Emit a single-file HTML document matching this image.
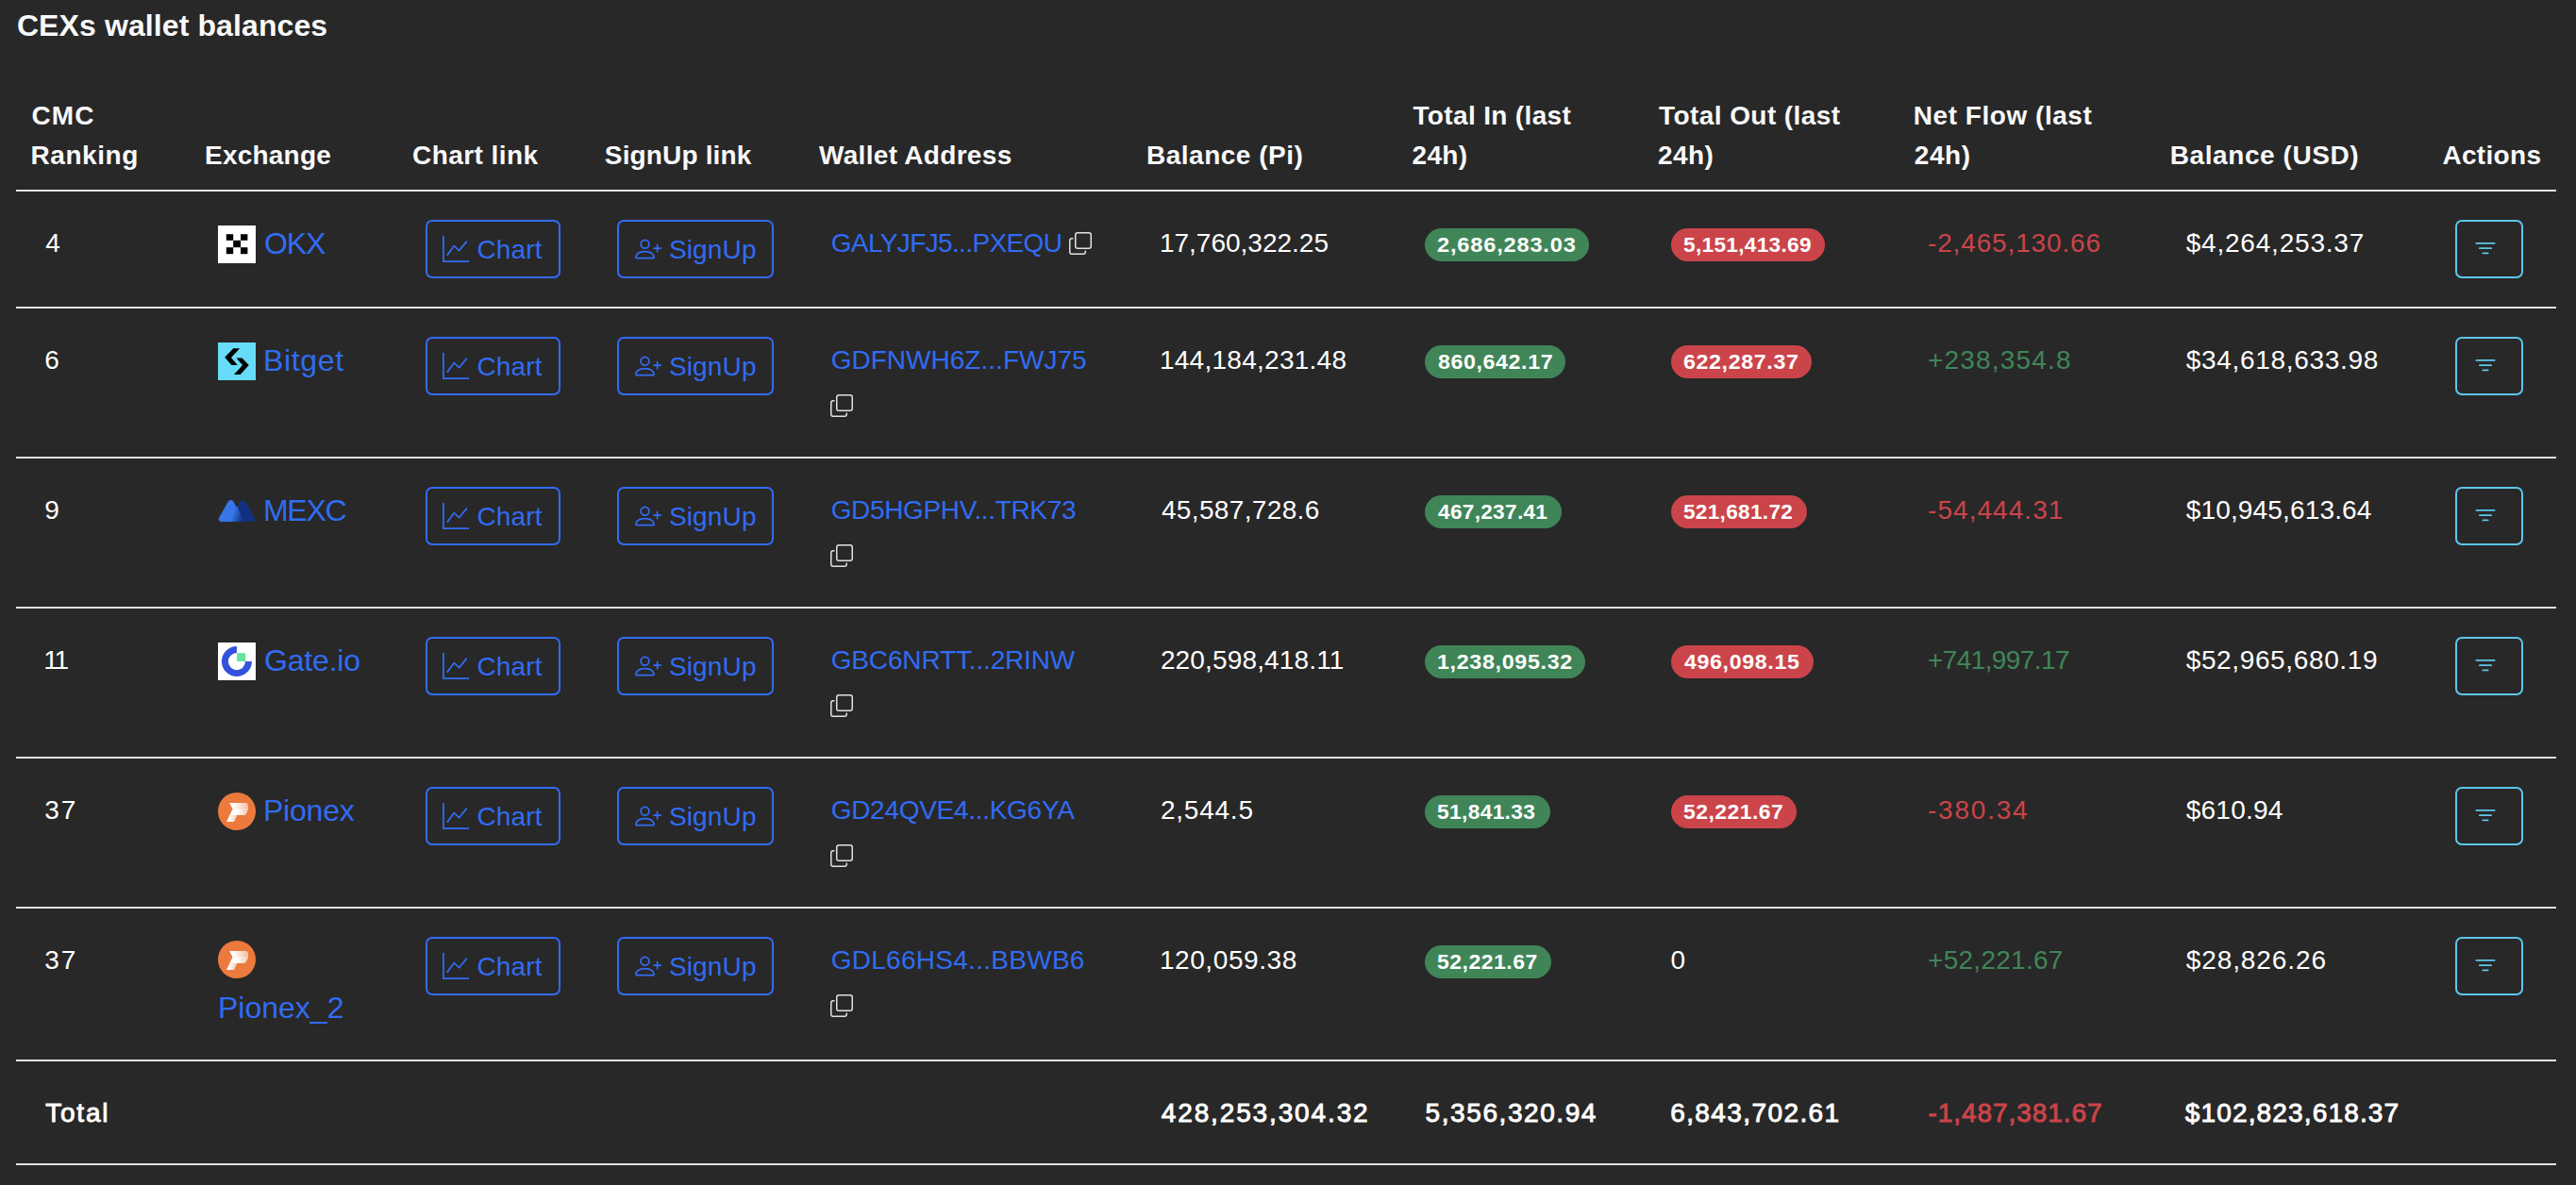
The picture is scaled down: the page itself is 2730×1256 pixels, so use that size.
<!DOCTYPE html>
<html><head><meta charset="utf-8"><title>CEXs wallet balances</title>
<style>
html,body{margin:0;padding:0;}
body{width:2730px;height:1256px;overflow:hidden;position:relative;background:#282828;font-family:"Liberation Sans",sans-serif;}
.t{position:absolute;white-space:nowrap;}
.abs{position:absolute;line-height:0;}
.btn{position:absolute;border:2px solid;border-radius:7px;box-sizing:content-box;}
.btn .ic{position:absolute;line-height:0;}
.badge{position:absolute;height:35px;border-radius:18px;}
</style></head><body>
<div class="t" style="left:17.90px;top:10.81px;font-size:32px;line-height:32px;color:#f8f9fa;font-weight:700;letter-spacing:0.105px;">CEXs wallet balances</div>
<div class="t" style="left:33.50px;top:108.89px;font-size:28px;line-height:28px;color:#f8f9fa;font-weight:700;letter-spacing:1.050px;">CMC</div>
<div class="t" style="left:32.50px;top:150.89px;font-size:28px;line-height:28px;color:#f8f9fa;font-weight:700;letter-spacing:0.550px;">Ranking</div>
<div class="t" style="left:217.00px;top:150.89px;font-size:28px;line-height:28px;color:#f8f9fa;font-weight:700;letter-spacing:0.214px;">Exchange</div>
<div class="t" style="left:437.00px;top:150.89px;font-size:28px;line-height:28px;color:#f8f9fa;font-weight:700;letter-spacing:0.444px;">Chart link</div>
<div class="t" style="left:640.80px;top:150.89px;font-size:28px;line-height:28px;color:#f8f9fa;font-weight:700;letter-spacing:0.160px;">SignUp link</div>
<div class="t" style="left:868.00px;top:150.89px;font-size:28px;line-height:28px;color:#f8f9fa;font-weight:700;letter-spacing:0.308px;">Wallet Address</div>
<div class="t" style="left:1215.00px;top:150.89px;font-size:28px;line-height:28px;color:#f8f9fa;font-weight:700;letter-spacing:0.500px;">Balance (Pi)</div>
<div class="t" style="left:1497.50px;top:108.89px;font-size:28px;line-height:28px;color:#f8f9fa;font-weight:700;letter-spacing:0.346px;">Total In (last</div>
<div class="t" style="left:1496.50px;top:150.89px;font-size:28px;line-height:28px;color:#f8f9fa;font-weight:700;letter-spacing:0.346px;">24h)</div>
<div class="t" style="left:1758.00px;top:108.89px;font-size:28px;line-height:28px;color:#f8f9fa;font-weight:700;letter-spacing:0.429px;">Total Out (last</div>
<div class="t" style="left:1757.00px;top:150.89px;font-size:28px;line-height:28px;color:#f8f9fa;font-weight:700;letter-spacing:0.429px;">24h)</div>
<div class="t" style="left:2027.80px;top:108.89px;font-size:28px;line-height:28px;color:#f8f9fa;font-weight:700;letter-spacing:0.538px;">Net Flow (last</div>
<div class="t" style="left:2028.80px;top:150.89px;font-size:28px;line-height:28px;color:#f8f9fa;font-weight:700;letter-spacing:0.538px;">24h)</div>
<div class="t" style="left:2299.80px;top:150.89px;font-size:28px;line-height:28px;color:#f8f9fa;font-weight:700;letter-spacing:0.575px;">Balance (USD)</div>
<div class="t" style="left:2588.40px;top:150.89px;font-size:28px;line-height:28px;color:#f8f9fa;font-weight:700;letter-spacing:0.317px;">Actions</div>
<div style="position:absolute;left:17px;top:201px;width:2692px;height:2px;background:#dee2e6"></div>
<div style="position:absolute;left:17px;top:325px;width:2692px;height:2px;background:#dee2e6"></div>
<div style="position:absolute;left:17px;top:484px;width:2692px;height:2px;background:#dee2e6"></div>
<div style="position:absolute;left:17px;top:643px;width:2692px;height:2px;background:#dee2e6"></div>
<div style="position:absolute;left:17px;top:802px;width:2692px;height:2px;background:#dee2e6"></div>
<div style="position:absolute;left:17px;top:961px;width:2692px;height:2px;background:#dee2e6"></div>
<div style="position:absolute;left:17px;top:1123px;width:2692px;height:2px;background:#dee2e6"></div>
<div style="position:absolute;left:17px;top:1233px;width:2692px;height:2px;background:#dee2e6"></div>
<div class="t" style="left:48.30px;top:243.69px;font-size:28px;line-height:28px;color:#ffffff;font-weight:400;letter-spacing:0.000px;">4</div>
<div class="abs" style="left:231px;top:239px;width:40px;height:40px"><svg width="40" height="40" viewBox="0 0 40 40"><rect width="40" height="40" fill="#fff"/><rect x="8.8" y="9.2" width="7.4" height="6.6" fill="#000"/><rect x="24" y="9.2" width="7.4" height="6.6" fill="#000"/><rect x="16.2" y="15.8" width="7.8" height="7.4" fill="#000"/><rect x="8.8" y="23.2" width="7.4" height="7" fill="#000"/><rect x="24" y="23.2" width="7.4" height="7" fill="#000"/></svg></div>
<div class="t" style="left:280.00px;top:242.11px;font-size:32px;line-height:32px;color:#316cf4;font-weight:400;letter-spacing:-1.100px;">OKX</div>
<div class="btn" style="left:451px;top:233px;width:139px;height:58px;border-color:#316cf4;color:#316cf4"><span class="ic" style="left:16px;top:15px"><svg width="28" height="28" viewBox="0 0 16 16" fill="currentColor"><path fill-rule="evenodd" d="M0 0h1v15h15v1H0zm14.817 3.113a.5.5 0 0 1 .07.704l-4.5 5.5a.5.5 0 0 1-.74.037L7.06 6.767l-3.656 5.027a.5.5 0 0 1-.808-.588l4-5.5a.5.5 0 0 1 .758-.06l2.609 2.61 4.15-5.073a.5.5 0 0 1 .704-.07"/></svg></span></div>
<div class="t" style="left:505.50px;top:250.59px;font-size:28px;line-height:28px;color:#316cf4;font-weight:400;letter-spacing:0.125px;">Chart</div>
<div class="btn" style="left:654px;top:233px;width:162px;height:58px;border-color:#316cf4;color:#316cf4"><span class="ic" style="left:16.6px;top:15px"><svg width="28" height="28" viewBox="0 0 16 16" fill="currentColor"><path d="M6 8a3 3 0 1 0 0-6 3 3 0 0 0 0 6m2-3a2 2 0 1 1-4 0 2 2 0 0 1 4 0m4 8c0 1-1 1-1 1H1s-1 0-1-1 1-4 6-4 6 3 6 4m-1-.004c-.001-.246-.154-.986-.832-1.664C9.516 10.68 8.289 10 6 10s-3.516.68-4.168 1.332c-.678.678-.83 1.418-.832 1.664z"/><path fill-rule="evenodd" d="M13.5 5a.5.5 0 0 1 .5.5V7h1.5a.5.5 0 0 1 0 1H14v1.5a.5.5 0 0 1-1 0V8h-1.5a.5.5 0 0 1 0-1H13V5.5a.5.5 0 0 1 .5-.5"/></svg></span></div>
<div class="t" style="left:708.90px;top:250.59px;font-size:28px;line-height:28px;color:#316cf4;font-weight:400;letter-spacing:0.160px;">SignUp</div>
<div class="t" style="left:880.70px;top:243.69px;font-size:28px;line-height:28px;color:#316cf4;font-weight:400;letter-spacing:-0.627px;">GALYJFJ5...PXEQU</div>
<div class="abs" style="left:1133px;top:246px;color:#dee2e6"><svg width="24" height="24" viewBox="0 0 16 16" fill="currentColor"><path fill-rule="evenodd" d="M4 2a2 2 0 0 1 2-2h8a2 2 0 0 1 2 2v8a2 2 0 0 1-2 2H6a2 2 0 0 1-2-2zm2-1a1 1 0 0 0-1 1v8a1 1 0 0 0 1 1h8a1 1 0 0 0 1-1V2a1 1 0 0 0-1-1zM2 5a1 1 0 0 0-1 1v8a1 1 0 0 0 1 1h8a1 1 0 0 0 1-1v-1h1v1a2 2 0 0 1-2 2H2a2 2 0 0 1-2-2V6a2 2 0 0 1 2-2h1v1z"/></svg></div>
<div class="t" style="left:1228.90px;top:243.69px;font-size:28px;line-height:28px;color:#ffffff;font-weight:400;letter-spacing:0.000px;">17,760,322.25</div>
<div class="badge" style="left:1510px;top:242px;width:173.8px;background:#408558"></div>
<div class="t" style="left:1523.23px;top:249.37px;font-size:22px;line-height:22px;color:#fff;font-weight:700;letter-spacing:0.772px;transform:scaleX(1.0717);transform-origin:0 0;">2,686,283.03</div>
<div class="badge" style="left:1771px;top:242px;width:163.0px;background:#cb444a"></div>
<div class="t" style="left:1784.47px;top:249.37px;font-size:22px;line-height:22px;color:#fff;font-weight:700;letter-spacing:0.310px;transform:scaleX(1.0276);transform-origin:0 0;">5,151,413.69</div>
<div class="t" style="left:2043.00px;top:243.69px;font-size:28px;line-height:28px;color:#cb444a;font-weight:400;letter-spacing:0.858px;">-2,465,130.66</div>
<div class="t" style="left:2316.70px;top:243.69px;font-size:28px;line-height:28px;color:#ffffff;font-weight:400;letter-spacing:0.792px;">$4,264,253.37</div>
<div class="btn" style="left:2602px;top:233px;width:68px;height:58px;border-color:#5cc7ec;color:#5cc7ec"><span class="ic" style="left:16px;top:15px"><svg width="28" height="28" viewBox="0 0 16 16" fill="currentColor"><path d="M6 10.5a.5.5 0 0 1 .5-.5h3a.5.5 0 0 1 0 1h-3a.5.5 0 0 1-.5-.5m-2-3a.5.5 0 0 1 .5-.5h7a.5.5 0 0 1 0 1h-7a.5.5 0 0 1-.5-.5m-2-3a.5.5 0 0 1 .5-.5h11a.5.5 0 0 1 0 1h-11a.5.5 0 0 1-.5-.5"/></svg></span></div>
<div class="t" style="left:47.30px;top:367.69px;font-size:28px;line-height:28px;color:#ffffff;font-weight:400;letter-spacing:0.000px;">6</div>
<div class="abs" style="left:231px;top:363px;width:40px;height:40px"><svg width="40" height="40" viewBox="0 0 40 40"><rect width="40" height="40" fill="#66dcf8"/><path d="M16.3 6.2H23.1L14 16 20.7 23.9H14.4L7.2 15.8Z" fill="#000"/><path d="M19.5 16.5H25.6L32.8 24.1 23.7 33.9H16.9L26 24.1Z" fill="#000"/></svg></div>
<div class="t" style="left:279.00px;top:366.11px;font-size:32px;line-height:32px;color:#316cf4;font-weight:400;letter-spacing:0.640px;">Bitget</div>
<div class="btn" style="left:451px;top:357px;width:139px;height:58px;border-color:#316cf4;color:#316cf4"><span class="ic" style="left:16px;top:15px"><svg width="28" height="28" viewBox="0 0 16 16" fill="currentColor"><path fill-rule="evenodd" d="M0 0h1v15h15v1H0zm14.817 3.113a.5.5 0 0 1 .07.704l-4.5 5.5a.5.5 0 0 1-.74.037L7.06 6.767l-3.656 5.027a.5.5 0 0 1-.808-.588l4-5.5a.5.5 0 0 1 .758-.06l2.609 2.61 4.15-5.073a.5.5 0 0 1 .704-.07"/></svg></span></div>
<div class="t" style="left:505.50px;top:374.59px;font-size:28px;line-height:28px;color:#316cf4;font-weight:400;letter-spacing:0.125px;">Chart</div>
<div class="btn" style="left:654px;top:357px;width:162px;height:58px;border-color:#316cf4;color:#316cf4"><span class="ic" style="left:16.6px;top:15px"><svg width="28" height="28" viewBox="0 0 16 16" fill="currentColor"><path d="M6 8a3 3 0 1 0 0-6 3 3 0 0 0 0 6m2-3a2 2 0 1 1-4 0 2 2 0 0 1 4 0m4 8c0 1-1 1-1 1H1s-1 0-1-1 1-4 6-4 6 3 6 4m-1-.004c-.001-.246-.154-.986-.832-1.664C9.516 10.68 8.289 10 6 10s-3.516.68-4.168 1.332c-.678.678-.83 1.418-.832 1.664z"/><path fill-rule="evenodd" d="M13.5 5a.5.5 0 0 1 .5.5V7h1.5a.5.5 0 0 1 0 1H14v1.5a.5.5 0 0 1-1 0V8h-1.5a.5.5 0 0 1 0-1H13V5.5a.5.5 0 0 1 .5-.5"/></svg></span></div>
<div class="t" style="left:708.90px;top:374.59px;font-size:28px;line-height:28px;color:#316cf4;font-weight:400;letter-spacing:0.160px;">SignUp</div>
<div class="t" style="left:880.70px;top:367.69px;font-size:28px;line-height:28px;color:#316cf4;font-weight:400;letter-spacing:0.020px;">GDFNWH6Z...FWJ75</div>
<div class="abs" style="left:880px;top:418px;color:#dee2e6"><svg width="24" height="24" viewBox="0 0 16 16" fill="currentColor"><path fill-rule="evenodd" d="M4 2a2 2 0 0 1 2-2h8a2 2 0 0 1 2 2v8a2 2 0 0 1-2 2H6a2 2 0 0 1-2-2zm2-1a1 1 0 0 0-1 1v8a1 1 0 0 0 1 1h8a1 1 0 0 0 1-1V2a1 1 0 0 0-1-1zM2 5a1 1 0 0 0-1 1v8a1 1 0 0 0 1 1h8a1 1 0 0 0 1-1v-1h1v1a2 2 0 0 1-2 2H2a2 2 0 0 1-2-2V6a2 2 0 0 1 2-2h1v1z"/></svg></div>
<div class="t" style="left:1228.90px;top:367.69px;font-size:28px;line-height:28px;color:#ffffff;font-weight:400;letter-spacing:0.269px;">144,184,231.48</div>
<div class="badge" style="left:1510px;top:366px;width:149.0px;background:#408558"></div>
<div class="t" style="left:1523.65px;top:373.37px;font-size:22px;line-height:22px;color:#fff;font-weight:700;letter-spacing:0.597px;transform:scaleX(1.0523);transform-origin:0 0;">860,642.17</div>
<div class="badge" style="left:1771px;top:366px;width:148.9px;background:#cb444a"></div>
<div class="t" style="left:1784.35px;top:373.37px;font-size:22px;line-height:22px;color:#fff;font-weight:700;letter-spacing:0.612px;transform:scaleX(1.0537);transform-origin:0 0;">622,287.37</div>
<div class="t" style="left:2043.00px;top:367.69px;font-size:28px;line-height:28px;color:#408558;font-weight:400;letter-spacing:1.178px;">+238,354.8</div>
<div class="t" style="left:2316.70px;top:367.69px;font-size:28px;line-height:28px;color:#ffffff;font-weight:400;letter-spacing:0.700px;">$34,618,633.98</div>
<div class="btn" style="left:2602px;top:357px;width:68px;height:58px;border-color:#5cc7ec;color:#5cc7ec"><span class="ic" style="left:16px;top:15px"><svg width="28" height="28" viewBox="0 0 16 16" fill="currentColor"><path d="M6 10.5a.5.5 0 0 1 .5-.5h3a.5.5 0 0 1 0 1h-3a.5.5 0 0 1-.5-.5m-2-3a.5.5 0 0 1 .5-.5h7a.5.5 0 0 1 0 1h-7a.5.5 0 0 1-.5-.5m-2-3a.5.5 0 0 1 .5-.5h11a.5.5 0 0 1 0 1h-11a.5.5 0 0 1-.5-.5"/></svg></span></div>
<div class="t" style="left:47.30px;top:526.69px;font-size:28px;line-height:28px;color:#ffffff;font-weight:400;letter-spacing:0.000px;">9</div>
<div class="abs" style="left:231px;top:522px;width:40px;height:40px"><svg width="40" height="40" viewBox="0 0 40 40"><defs><linearGradient id="mg" gradientUnits="userSpaceOnUse" x1="16" y1="22" x2="27" y2="26"><stop offset="0" stop-color="#3775e8"/><stop offset="1" stop-color="#12307f"/></linearGradient></defs><path d="M26.2 8.2C24.6 8.2 23.6 9.2 22.8 10.6L13.2 27.2C12.2 29.2 13.4 30.9 15.6 30.9H36.4C38.8 30.9 39.9 28.8 38.8 26.8L29.6 10.6C28.8 9.2 27.8 8.2 26.2 8.2Z" fill="#12307f"/><path d="M13.6 8C12 8 11 9 10.2 10.4L1.2 26.4C0 28.6 1.2 30.9 3.6 30.9H27L17 10.4C16.2 9 15.2 8 13.6 8Z" fill="#3775e8"/><path d="M20.3 14.2L13.2 27.2C12.2 29.2 13.4 30.9 15.6 30.9H27Z" fill="url(#mg)"/></svg></div>
<div class="t" style="left:279.00px;top:525.11px;font-size:32px;line-height:32px;color:#316cf4;font-weight:400;letter-spacing:-1.300px;">MEXC</div>
<div class="btn" style="left:451px;top:516px;width:139px;height:58px;border-color:#316cf4;color:#316cf4"><span class="ic" style="left:16px;top:15px"><svg width="28" height="28" viewBox="0 0 16 16" fill="currentColor"><path fill-rule="evenodd" d="M0 0h1v15h15v1H0zm14.817 3.113a.5.5 0 0 1 .07.704l-4.5 5.5a.5.5 0 0 1-.74.037L7.06 6.767l-3.656 5.027a.5.5 0 0 1-.808-.588l4-5.5a.5.5 0 0 1 .758-.06l2.609 2.61 4.15-5.073a.5.5 0 0 1 .704-.07"/></svg></span></div>
<div class="t" style="left:505.50px;top:533.59px;font-size:28px;line-height:28px;color:#316cf4;font-weight:400;letter-spacing:0.125px;">Chart</div>
<div class="btn" style="left:654px;top:516px;width:162px;height:58px;border-color:#316cf4;color:#316cf4"><span class="ic" style="left:16.6px;top:15px"><svg width="28" height="28" viewBox="0 0 16 16" fill="currentColor"><path d="M6 8a3 3 0 1 0 0-6 3 3 0 0 0 0 6m2-3a2 2 0 1 1-4 0 2 2 0 0 1 4 0m4 8c0 1-1 1-1 1H1s-1 0-1-1 1-4 6-4 6 3 6 4m-1-.004c-.001-.246-.154-.986-.832-1.664C9.516 10.68 8.289 10 6 10s-3.516.68-4.168 1.332c-.678.678-.83 1.418-.832 1.664z"/><path fill-rule="evenodd" d="M13.5 5a.5.5 0 0 1 .5.5V7h1.5a.5.5 0 0 1 0 1H14v1.5a.5.5 0 0 1-1 0V8h-1.5a.5.5 0 0 1 0-1H13V5.5a.5.5 0 0 1 .5-.5"/></svg></span></div>
<div class="t" style="left:708.90px;top:533.59px;font-size:28px;line-height:28px;color:#316cf4;font-weight:400;letter-spacing:0.160px;">SignUp</div>
<div class="t" style="left:880.70px;top:526.69px;font-size:28px;line-height:28px;color:#316cf4;font-weight:400;letter-spacing:-0.353px;">GD5HGPHV...TRK73</div>
<div class="abs" style="left:880px;top:577px;color:#dee2e6"><svg width="24" height="24" viewBox="0 0 16 16" fill="currentColor"><path fill-rule="evenodd" d="M4 2a2 2 0 0 1 2-2h8a2 2 0 0 1 2 2v8a2 2 0 0 1-2 2H6a2 2 0 0 1-2-2zm2-1a1 1 0 0 0-1 1v8a1 1 0 0 0 1 1h8a1 1 0 0 0 1-1V2a1 1 0 0 0-1-1zM2 5a1 1 0 0 0-1 1v8a1 1 0 0 0 1 1h8a1 1 0 0 0 1-1v-1h1v1a2 2 0 0 1-2 2H2a2 2 0 0 1-2-2V6a2 2 0 0 1 2-2h1v1z"/></svg></div>
<div class="t" style="left:1230.90px;top:526.69px;font-size:28px;line-height:28px;color:#ffffff;font-weight:400;letter-spacing:0.355px;">45,587,728.6</div>
<div class="badge" style="left:1510px;top:525px;width:144.8px;background:#408558"></div>
<div class="t" style="left:1524.40px;top:532.37px;font-size:22px;line-height:22px;color:#fff;font-weight:700;letter-spacing:0.314px;transform:scaleX(1.0264);transform-origin:0 0;">467,237.41</div>
<div class="badge" style="left:1771px;top:525px;width:143.9px;background:#cb444a"></div>
<div class="t" style="left:1784.37px;top:532.37px;font-size:22px;line-height:22px;color:#fff;font-weight:700;letter-spacing:0.309px;transform:scaleX(1.0261);transform-origin:0 0;">521,681.72</div>
<div class="t" style="left:2043.00px;top:526.69px;font-size:28px;line-height:28px;color:#cb444a;font-weight:400;letter-spacing:1.056px;">-54,444.31</div>
<div class="t" style="left:2316.70px;top:526.69px;font-size:28px;line-height:28px;color:#ffffff;font-weight:400;letter-spacing:0.162px;">$10,945,613.64</div>
<div class="btn" style="left:2602px;top:516px;width:68px;height:58px;border-color:#5cc7ec;color:#5cc7ec"><span class="ic" style="left:16px;top:15px"><svg width="28" height="28" viewBox="0 0 16 16" fill="currentColor"><path d="M6 10.5a.5.5 0 0 1 .5-.5h3a.5.5 0 0 1 0 1h-3a.5.5 0 0 1-.5-.5m-2-3a.5.5 0 0 1 .5-.5h7a.5.5 0 0 1 0 1h-7a.5.5 0 0 1-.5-.5m-2-3a.5.5 0 0 1 .5-.5h11a.5.5 0 0 1 0 1h-11a.5.5 0 0 1-.5-.5"/></svg></span></div>
<div class="t" style="left:46.30px;top:685.69px;font-size:28px;line-height:28px;color:#ffffff;font-weight:400;letter-spacing:-2.300px;">11</div>
<div class="abs" style="left:231px;top:681px;width:40px;height:40px"><svg width="40" height="40" viewBox="0 0 40 40"><rect width="40" height="40" fill="#fff"/><path d="M19.9 4.05A16 16 0 1 0 35.9 20.05H29.0A9.07 9.07 0 1 1 19.9 11V4.05Z" fill="#3352dc"/><rect x="20.1" y="11.2" width="9.1" height="8.85" fill="#6ae29e"/></svg></div>
<div class="t" style="left:280.00px;top:684.11px;font-size:32px;line-height:32px;color:#316cf4;font-weight:400;letter-spacing:-0.183px;">Gate.io</div>
<div class="btn" style="left:451px;top:675px;width:139px;height:58px;border-color:#316cf4;color:#316cf4"><span class="ic" style="left:16px;top:15px"><svg width="28" height="28" viewBox="0 0 16 16" fill="currentColor"><path fill-rule="evenodd" d="M0 0h1v15h15v1H0zm14.817 3.113a.5.5 0 0 1 .07.704l-4.5 5.5a.5.5 0 0 1-.74.037L7.06 6.767l-3.656 5.027a.5.5 0 0 1-.808-.588l4-5.5a.5.5 0 0 1 .758-.06l2.609 2.61 4.15-5.073a.5.5 0 0 1 .704-.07"/></svg></span></div>
<div class="t" style="left:505.50px;top:692.59px;font-size:28px;line-height:28px;color:#316cf4;font-weight:400;letter-spacing:0.125px;">Chart</div>
<div class="btn" style="left:654px;top:675px;width:162px;height:58px;border-color:#316cf4;color:#316cf4"><span class="ic" style="left:16.6px;top:15px"><svg width="28" height="28" viewBox="0 0 16 16" fill="currentColor"><path d="M6 8a3 3 0 1 0 0-6 3 3 0 0 0 0 6m2-3a2 2 0 1 1-4 0 2 2 0 0 1 4 0m4 8c0 1-1 1-1 1H1s-1 0-1-1 1-4 6-4 6 3 6 4m-1-.004c-.001-.246-.154-.986-.832-1.664C9.516 10.68 8.289 10 6 10s-3.516.68-4.168 1.332c-.678.678-.83 1.418-.832 1.664z"/><path fill-rule="evenodd" d="M13.5 5a.5.5 0 0 1 .5.5V7h1.5a.5.5 0 0 1 0 1H14v1.5a.5.5 0 0 1-1 0V8h-1.5a.5.5 0 0 1 0-1H13V5.5a.5.5 0 0 1 .5-.5"/></svg></span></div>
<div class="t" style="left:708.90px;top:692.59px;font-size:28px;line-height:28px;color:#316cf4;font-weight:400;letter-spacing:0.160px;">SignUp</div>
<div class="t" style="left:880.70px;top:685.69px;font-size:28px;line-height:28px;color:#316cf4;font-weight:400;letter-spacing:-0.153px;">GBC6NRTT...2RINW</div>
<div class="abs" style="left:880px;top:736px;color:#dee2e6"><svg width="24" height="24" viewBox="0 0 16 16" fill="currentColor"><path fill-rule="evenodd" d="M4 2a2 2 0 0 1 2-2h8a2 2 0 0 1 2 2v8a2 2 0 0 1-2 2H6a2 2 0 0 1-2-2zm2-1a1 1 0 0 0-1 1v8a1 1 0 0 0 1 1h8a1 1 0 0 0 1-1V2a1 1 0 0 0-1-1zM2 5a1 1 0 0 0-1 1v8a1 1 0 0 0 1 1h8a1 1 0 0 0 1-1v-1h1v1a2 2 0 0 1-2 2H2a2 2 0 0 1-2-2V6a2 2 0 0 1 2-2h1v1z"/></svg></div>
<div class="t" style="left:1229.90px;top:685.69px;font-size:28px;line-height:28px;color:#ffffff;font-weight:400;letter-spacing:0.154px;">220,598,418.11</div>
<div class="badge" style="left:1510px;top:684px;width:169.9px;background:#408558"></div>
<div class="t" style="left:1522.54px;top:691.37px;font-size:22px;line-height:22px;color:#fff;font-weight:700;letter-spacing:0.632px;transform:scaleX(1.0579);transform-origin:0 0;">1,238,095.32</div>
<div class="badge" style="left:1771px;top:684px;width:151.0px;background:#cb444a"></div>
<div class="t" style="left:1785.40px;top:691.37px;font-size:22px;line-height:22px;color:#fff;font-weight:700;letter-spacing:0.617px;transform:scaleX(1.0532);transform-origin:0 0;">496,098.15</div>
<div class="t" style="left:2043.00px;top:685.69px;font-size:28px;line-height:28px;color:#408558;font-weight:400;letter-spacing:-0.600px;">+741,997.17</div>
<div class="t" style="left:2316.70px;top:685.69px;font-size:28px;line-height:28px;color:#ffffff;font-weight:400;letter-spacing:0.631px;">$52,965,680.19</div>
<div class="btn" style="left:2602px;top:675px;width:68px;height:58px;border-color:#5cc7ec;color:#5cc7ec"><span class="ic" style="left:16px;top:15px"><svg width="28" height="28" viewBox="0 0 16 16" fill="currentColor"><path d="M6 10.5a.5.5 0 0 1 .5-.5h3a.5.5 0 0 1 0 1h-3a.5.5 0 0 1-.5-.5m-2-3a.5.5 0 0 1 .5-.5h7a.5.5 0 0 1 0 1h-7a.5.5 0 0 1-.5-.5m-2-3a.5.5 0 0 1 .5-.5h11a.5.5 0 0 1 0 1h-11a.5.5 0 0 1-.5-.5"/></svg></span></div>
<div class="t" style="left:47.30px;top:844.69px;font-size:28px;line-height:28px;color:#ffffff;font-weight:400;letter-spacing:1.900px;">37</div>
<div class="abs" style="left:231px;top:840px;width:40px;height:40px"><svg width="40" height="40" viewBox="0 0 40 40"><defs><linearGradient id="pg1" gradientUnits="userSpaceOnUse" x1="14" y1="0" x2="32" y2="0"><stop offset="0.1" stop-color="#fff"/><stop offset="1" stop-color="#f2bf9f"/></linearGradient><linearGradient id="pg2" gradientUnits="userSpaceOnUse" x1="13" y1="0" x2="32" y2="0"><stop offset="0.4" stop-color="#fff"/><stop offset="1" stop-color="#f4c6a9"/></linearGradient><linearGradient id="pg3" gradientUnits="userSpaceOnUse" x1="9" y1="0" x2="20" y2="0"><stop offset="0.3" stop-color="#fff"/><stop offset="1" stop-color="#f3c4a6"/></linearGradient></defs><circle cx="20" cy="20" r="20" fill="#ec7a3d"/><path d="M12.3 11H28.5C30.8 11 32.1 13 31.9 15.2L31.6 17.4C31.1 20.6 29.6 23.7 27.5 23.7H20.3L16.9 30.9H9.1L15.7 17.4Z" fill="#fbe6d9"/><path d="M12.3 11H28.5C30.8 11 32.1 13 31.9 15.2L31.6 17.4H15.7Z" fill="url(#pg1)"/><path d="M15.7 17.4H31.6C31.1 20.6 29.6 23.7 27.5 23.7H12.6Z" fill="url(#pg2)"/><path d="M12.65 24.1H20.15L16.9 30.9H9.1Z" fill="url(#pg3)"/></svg></div>
<div class="t" style="left:279.00px;top:843.11px;font-size:32px;line-height:32px;color:#316cf4;font-weight:400;letter-spacing:-0.220px;">Pionex</div>
<div class="btn" style="left:451px;top:834px;width:139px;height:58px;border-color:#316cf4;color:#316cf4"><span class="ic" style="left:16px;top:15px"><svg width="28" height="28" viewBox="0 0 16 16" fill="currentColor"><path fill-rule="evenodd" d="M0 0h1v15h15v1H0zm14.817 3.113a.5.5 0 0 1 .07.704l-4.5 5.5a.5.5 0 0 1-.74.037L7.06 6.767l-3.656 5.027a.5.5 0 0 1-.808-.588l4-5.5a.5.5 0 0 1 .758-.06l2.609 2.61 4.15-5.073a.5.5 0 0 1 .704-.07"/></svg></span></div>
<div class="t" style="left:505.50px;top:851.59px;font-size:28px;line-height:28px;color:#316cf4;font-weight:400;letter-spacing:0.125px;">Chart</div>
<div class="btn" style="left:654px;top:834px;width:162px;height:58px;border-color:#316cf4;color:#316cf4"><span class="ic" style="left:16.6px;top:15px"><svg width="28" height="28" viewBox="0 0 16 16" fill="currentColor"><path d="M6 8a3 3 0 1 0 0-6 3 3 0 0 0 0 6m2-3a2 2 0 1 1-4 0 2 2 0 0 1 4 0m4 8c0 1-1 1-1 1H1s-1 0-1-1 1-4 6-4 6 3 6 4m-1-.004c-.001-.246-.154-.986-.832-1.664C9.516 10.68 8.289 10 6 10s-3.516.68-4.168 1.332c-.678.678-.83 1.418-.832 1.664z"/><path fill-rule="evenodd" d="M13.5 5a.5.5 0 0 1 .5.5V7h1.5a.5.5 0 0 1 0 1H14v1.5a.5.5 0 0 1-1 0V8h-1.5a.5.5 0 0 1 0-1H13V5.5a.5.5 0 0 1 .5-.5"/></svg></span></div>
<div class="t" style="left:708.90px;top:851.59px;font-size:28px;line-height:28px;color:#316cf4;font-weight:400;letter-spacing:0.160px;">SignUp</div>
<div class="t" style="left:880.70px;top:844.69px;font-size:28px;line-height:28px;color:#316cf4;font-weight:400;letter-spacing:-0.287px;">GD24QVE4...KG6YA</div>
<div class="abs" style="left:880px;top:895px;color:#dee2e6"><svg width="24" height="24" viewBox="0 0 16 16" fill="currentColor"><path fill-rule="evenodd" d="M4 2a2 2 0 0 1 2-2h8a2 2 0 0 1 2 2v8a2 2 0 0 1-2 2H6a2 2 0 0 1-2-2zm2-1a1 1 0 0 0-1 1v8a1 1 0 0 0 1 1h8a1 1 0 0 0 1-1V2a1 1 0 0 0-1-1zM2 5a1 1 0 0 0-1 1v8a1 1 0 0 0 1 1h8a1 1 0 0 0 1-1v-1h1v1a2 2 0 0 1-2 2H2a2 2 0 0 1-2-2V6a2 2 0 0 1 2-2h1v1z"/></svg></div>
<div class="t" style="left:1229.90px;top:844.69px;font-size:28px;line-height:28px;color:#ffffff;font-weight:400;letter-spacing:0.783px;">2,544.5</div>
<div class="badge" style="left:1510px;top:843px;width:132.7px;background:#408558"></div>
<div class="t" style="left:1523.37px;top:850.37px;font-size:22px;line-height:22px;color:#fff;font-weight:700;letter-spacing:0.364px;transform:scaleX(1.0309);transform-origin:0 0;">51,841.33</div>
<div class="badge" style="left:1771px;top:843px;width:133.1px;background:#cb444a"></div>
<div class="t" style="left:1784.36px;top:850.37px;font-size:22px;line-height:22px;color:#fff;font-weight:700;letter-spacing:0.463px;transform:scaleX(1.0401);transform-origin:0 0;">52,221.67</div>
<div class="t" style="left:2043.00px;top:844.69px;font-size:28px;line-height:28px;color:#cb444a;font-weight:400;letter-spacing:1.783px;">-380.34</div>
<div class="t" style="left:2316.70px;top:844.69px;font-size:28px;line-height:28px;color:#ffffff;font-weight:400;letter-spacing:0.250px;">$610.94</div>
<div class="btn" style="left:2602px;top:834px;width:68px;height:58px;border-color:#5cc7ec;color:#5cc7ec"><span class="ic" style="left:16px;top:15px"><svg width="28" height="28" viewBox="0 0 16 16" fill="currentColor"><path d="M6 10.5a.5.5 0 0 1 .5-.5h3a.5.5 0 0 1 0 1h-3a.5.5 0 0 1-.5-.5m-2-3a.5.5 0 0 1 .5-.5h7a.5.5 0 0 1 0 1h-7a.5.5 0 0 1-.5-.5m-2-3a.5.5 0 0 1 .5-.5h11a.5.5 0 0 1 0 1h-11a.5.5 0 0 1-.5-.5"/></svg></span></div>
<div class="t" style="left:47.30px;top:1003.69px;font-size:28px;line-height:28px;color:#ffffff;font-weight:400;letter-spacing:1.900px;">37</div>
<div class="abs" style="left:231px;top:996.7px;width:40px;height:40px"><svg width="40" height="40" viewBox="0 0 40 40"><defs><linearGradient id="pg1" gradientUnits="userSpaceOnUse" x1="14" y1="0" x2="32" y2="0"><stop offset="0.1" stop-color="#fff"/><stop offset="1" stop-color="#f2bf9f"/></linearGradient><linearGradient id="pg2" gradientUnits="userSpaceOnUse" x1="13" y1="0" x2="32" y2="0"><stop offset="0.4" stop-color="#fff"/><stop offset="1" stop-color="#f4c6a9"/></linearGradient><linearGradient id="pg3" gradientUnits="userSpaceOnUse" x1="9" y1="0" x2="20" y2="0"><stop offset="0.3" stop-color="#fff"/><stop offset="1" stop-color="#f3c4a6"/></linearGradient></defs><circle cx="20" cy="20" r="20" fill="#ec7a3d"/><path d="M12.3 11H28.5C30.8 11 32.1 13 31.9 15.2L31.6 17.4C31.1 20.6 29.6 23.7 27.5 23.7H20.3L16.9 30.9H9.1L15.7 17.4Z" fill="#fbe6d9"/><path d="M12.3 11H28.5C30.8 11 32.1 13 31.9 15.2L31.6 17.4H15.7Z" fill="url(#pg1)"/><path d="M15.7 17.4H31.6C31.1 20.6 29.6 23.7 27.5 23.7H12.6Z" fill="url(#pg2)"/><path d="M12.65 24.1H20.15L16.9 30.9H9.1Z" fill="url(#pg3)"/></svg></div>
<div class="t" style="left:231.00px;top:1051.61px;font-size:32px;line-height:32px;color:#316cf4;font-weight:400;letter-spacing:0.000px;">Pionex_2</div>
<div class="btn" style="left:451px;top:993px;width:139px;height:58px;border-color:#316cf4;color:#316cf4"><span class="ic" style="left:16px;top:15px"><svg width="28" height="28" viewBox="0 0 16 16" fill="currentColor"><path fill-rule="evenodd" d="M0 0h1v15h15v1H0zm14.817 3.113a.5.5 0 0 1 .07.704l-4.5 5.5a.5.5 0 0 1-.74.037L7.06 6.767l-3.656 5.027a.5.5 0 0 1-.808-.588l4-5.5a.5.5 0 0 1 .758-.06l2.609 2.61 4.15-5.073a.5.5 0 0 1 .704-.07"/></svg></span></div>
<div class="t" style="left:505.50px;top:1010.59px;font-size:28px;line-height:28px;color:#316cf4;font-weight:400;letter-spacing:0.125px;">Chart</div>
<div class="btn" style="left:654px;top:993px;width:162px;height:58px;border-color:#316cf4;color:#316cf4"><span class="ic" style="left:16.6px;top:15px"><svg width="28" height="28" viewBox="0 0 16 16" fill="currentColor"><path d="M6 8a3 3 0 1 0 0-6 3 3 0 0 0 0 6m2-3a2 2 0 1 1-4 0 2 2 0 0 1 4 0m4 8c0 1-1 1-1 1H1s-1 0-1-1 1-4 6-4 6 3 6 4m-1-.004c-.001-.246-.154-.986-.832-1.664C9.516 10.68 8.289 10 6 10s-3.516.68-4.168 1.332c-.678.678-.83 1.418-.832 1.664z"/><path fill-rule="evenodd" d="M13.5 5a.5.5 0 0 1 .5.5V7h1.5a.5.5 0 0 1 0 1H14v1.5a.5.5 0 0 1-1 0V8h-1.5a.5.5 0 0 1 0-1H13V5.5a.5.5 0 0 1 .5-.5"/></svg></span></div>
<div class="t" style="left:708.90px;top:1010.59px;font-size:28px;line-height:28px;color:#316cf4;font-weight:400;letter-spacing:0.160px;">SignUp</div>
<div class="t" style="left:880.70px;top:1003.69px;font-size:28px;line-height:28px;color:#316cf4;font-weight:400;letter-spacing:0.280px;">GDL66HS4...BBWB6</div>
<div class="abs" style="left:880px;top:1054px;color:#dee2e6"><svg width="24" height="24" viewBox="0 0 16 16" fill="currentColor"><path fill-rule="evenodd" d="M4 2a2 2 0 0 1 2-2h8a2 2 0 0 1 2 2v8a2 2 0 0 1-2 2H6a2 2 0 0 1-2-2zm2-1a1 1 0 0 0-1 1v8a1 1 0 0 0 1 1h8a1 1 0 0 0 1-1V2a1 1 0 0 0-1-1zM2 5a1 1 0 0 0-1 1v8a1 1 0 0 0 1 1h8a1 1 0 0 0 1-1v-1h1v1a2 2 0 0 1-2 2H2a2 2 0 0 1-2-2V6a2 2 0 0 1 2-2h1v1z"/></svg></div>
<div class="t" style="left:1228.90px;top:1003.69px;font-size:28px;line-height:28px;color:#ffffff;font-weight:400;letter-spacing:0.589px;">120,059.38</div>
<div class="badge" style="left:1510px;top:1002px;width:134.0px;background:#408558"></div>
<div class="t" style="left:1523.36px;top:1009.37px;font-size:22px;line-height:22px;color:#fff;font-weight:700;letter-spacing:0.497px;transform:scaleX(1.0432);transform-origin:0 0;">52,221.67</div>
<div class="t" style="left:1770.40px;top:1003.69px;font-size:28px;line-height:28px;color:#ffffff;font-weight:400;letter-spacing:0.000px;">0</div>
<div class="t" style="left:2043.00px;top:1003.69px;font-size:28px;line-height:28px;color:#408558;font-weight:400;letter-spacing:0.278px;">+52,221.67</div>
<div class="t" style="left:2316.70px;top:1003.69px;font-size:28px;line-height:28px;color:#ffffff;font-weight:400;letter-spacing:0.922px;">$28,826.26</div>
<div class="btn" style="left:2602px;top:993px;width:68px;height:58px;border-color:#5cc7ec;color:#5cc7ec"><span class="ic" style="left:16px;top:15px"><svg width="28" height="28" viewBox="0 0 16 16" fill="currentColor"><path d="M6 10.5a.5.5 0 0 1 .5-.5h3a.5.5 0 0 1 0 1h-3a.5.5 0 0 1-.5-.5m-2-3a.5.5 0 0 1 .5-.5h7a.5.5 0 0 1 0 1h-7a.5.5 0 0 1-.5-.5m-2-3a.5.5 0 0 1 .5-.5h11a.5.5 0 0 1 0 1h-11a.5.5 0 0 1-.5-.5"/></svg></span></div>
<div class="t" style="left:48.30px;top:1165.79px;font-size:28px;line-height:28px;color:#ffffff;font-weight:400;letter-spacing:1.750px;-webkit-text-stroke:0.9px currentColor;">Total</div>
<div class="t" style="left:1230.80px;top:1165.79px;font-size:28px;line-height:28px;color:#ffffff;font-weight:400;letter-spacing:1.862px;-webkit-text-stroke:0.9px currentColor;">428,253,304.32</div>
<div class="t" style="left:1510.60px;top:1165.79px;font-size:28px;line-height:28px;color:#ffffff;font-weight:400;letter-spacing:1.573px;-webkit-text-stroke:0.9px currentColor;">5,356,320.94</div>
<div class="t" style="left:1770.20px;top:1165.79px;font-size:28px;line-height:28px;color:#ffffff;font-weight:400;letter-spacing:1.409px;-webkit-text-stroke:0.9px currentColor;">6,843,702.61</div>
<div class="t" style="left:2043.60px;top:1165.79px;font-size:28px;line-height:28px;color:#cb444a;font-weight:400;letter-spacing:0.933px;-webkit-text-stroke:0.9px currentColor;">-1,487,381.67</div>
<div class="t" style="left:2315.80px;top:1165.79px;font-size:28px;line-height:28px;color:#ffffff;font-weight:400;letter-spacing:1.150px;-webkit-text-stroke:0.9px currentColor;">$102,823,618.37</div>
</body></html>
